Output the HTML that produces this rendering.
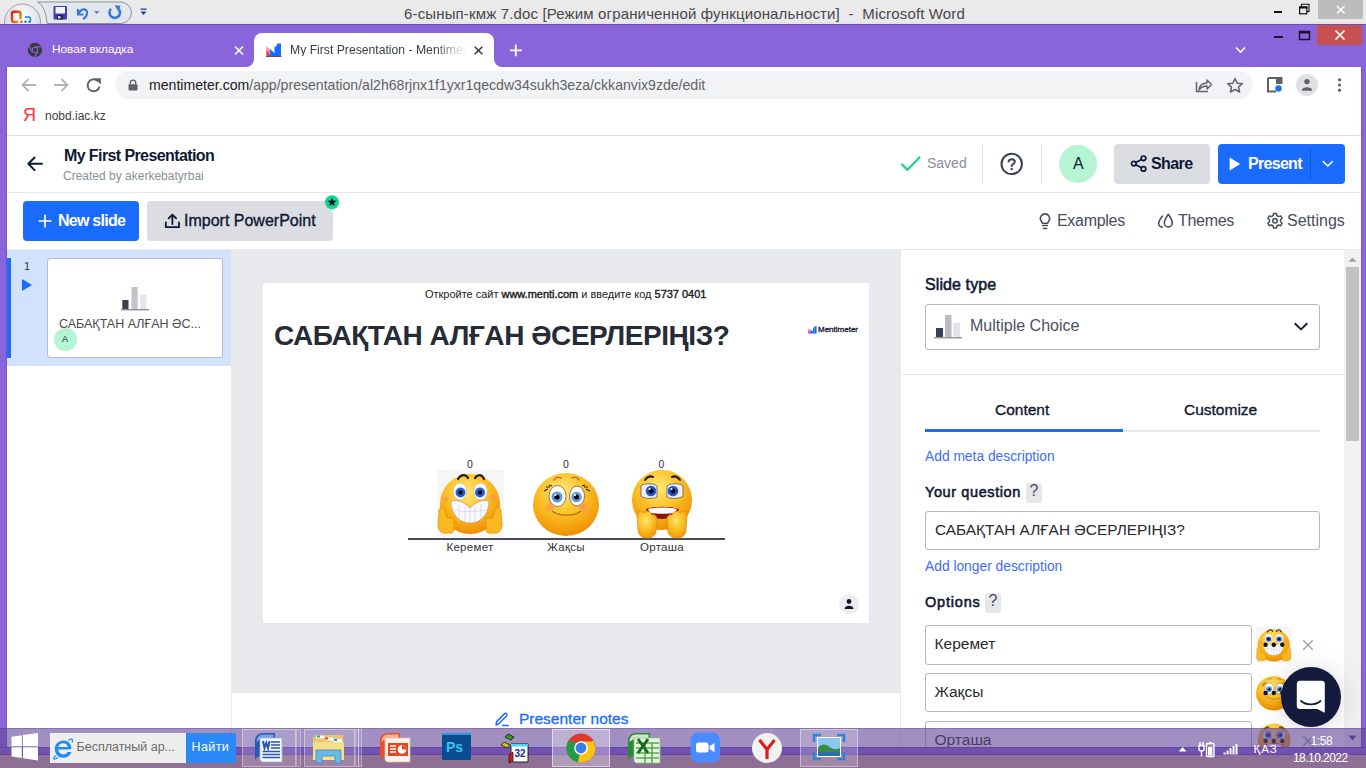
<!DOCTYPE html>
<html><head><meta charset="utf-8">
<style>
*{box-sizing:border-box;margin:0;padding:0}
html,body{width:1366px;height:768px;overflow:hidden;background:#fff;font-family:"Liberation Sans",sans-serif;}
.a{position:absolute}
.t{position:absolute;white-space:nowrap;line-height:1}
svg{position:absolute;overflow:visible}
</style></head><body>
<!-- ============ Word title bar ============ -->
<div class="a" style="left:0;top:0;width:1366px;height:24px;background:#eaeaea"></div>
<div class="a" style="left:0;top:22px;width:1366px;height:2px;background:#e3e3e3"></div>
<div class="t" id="wtitle" style="left:404px;top:6px;font-size:15px;color:#484848;letter-spacing:0.15px">6-сынып-кмж 7.doc [Режим ограниченной функциональности]&nbsp; -&nbsp; Microsoft Word</div>
<div class="a" style="left:1318px;top:0;width:45px;height:19px;background:#bcbcbc"></div>
<svg style="left:0;top:0" width="160" height="24" viewBox="0 0 160 24">
<defs><radialGradient id="ob" cx="50%" cy="30%" r="70%"><stop offset="0" stop-color="#ffffff"/><stop offset="1" stop-color="#c9d2de"/></radialGradient></defs>
<path d="M37.5 2 H122 A12 11 0 0 1 122 23.5 H47 C46 12 43 5 37.5 2 Z" fill="#e3e7ed" stroke="#8d8f93" stroke-width="1"/>
<circle cx="22.5" cy="22" r="18" fill="url(#ob)" stroke="#9aa3ae" stroke-width="1"/>
<defs><linearGradient id="og" x1="0" y1="0" x2="1" y2="1"><stop offset="0" stop-color="#d61a0a"/><stop offset="1" stop-color="#f8a010"/></linearGradient></defs>
<path d="M20.5 19 V13.5 A2 2 0 0 0 18.5 11.8 H14 A2 2 0 0 0 12 13.8 V20 A2 2 0 0 0 14 22 H18.3" fill="none" stroke="url(#og)" stroke-width="2.4"/>
<circle cx="21.5" cy="21.7" r="1.2" fill="#f05a10"/>
<path d="M24.8 17.2 H29.3 A1 1 0 0 1 30.3 18.2 V22" fill="none" stroke="#2a90e0" stroke-width="1.7"/>
<circle cx="25.5" cy="21.7" r="1.2" fill="#1a78d8"/><circle cx="29.5" cy="21.9" r="1.1" fill="#1a78d8"/>
<rect x="53.5" y="6" width="13.5" height="13.5" fill="#3e3eb4" rx="1"/>
<rect x="55.5" y="7" width="9.5" height="6.5" fill="#f4f6ff"/>
<rect x="57" y="15" width="6" height="4.5" fill="#20204a"/><rect x="58" y="16" width="2.5" height="2.5" fill="#ddd"/>
<path d="M78 9 L78 14.5 L83.5 14.5 M78.5 14 C81 8 87 8 87 12.5 C87 16 85 18 83 19" fill="none" stroke="#3a78d4" stroke-width="2.2"/>
<path d="M94 11 h5.5 l-2.75 3 z" fill="#5b7fb8"/>
<path d="M111 8.8 A5.3 5.3 0 1 0 117.8 8.2" fill="none" stroke="#3a78d4" stroke-width="2.6"/>
<path d="M114.5 5.3 L120.5 5.8 L118.5 11.5 Z" fill="#3a78d4"/>
<rect x="140.5" y="8.5" width="6" height="1.3" fill="#1e3f8a"/>
<path d="M140.5 11.5 h6 l-3 3.5 z" fill="#1e3f8a"/>
</svg>
<svg style="left:1270px;top:3px" width="50" height="16" viewBox="0 0 50 16">
<rect x="4" y="8" width="8" height="2" fill="#111"/>
<rect x="29.6" y="4" width="7.2" height="6.8" fill="none" stroke="#111" stroke-width="1.2"/><rect x="29" y="3.5" width="8.4" height="2" fill="#111"/>
<path d="M31.5 3.5 V1.3 H39 V8.5 H37" fill="none" stroke="#111" stroke-width="1.1"/>
</svg>
<svg style="left:1318px;top:0" width="45" height="19" viewBox="0 0 45 19">
<path d="M19 6 L26.5 13.5 M26.5 6 L19 13.5" stroke="#fff" stroke-width="1.5"/>
</svg>

<!-- ============ Chrome frame ============ -->
<div class="a" style="left:0;top:24px;width:1366px;height:731px;background:#8a64db"></div>
<div class="a" style="left:0;top:24px;width:1366px;height:1px;background:#6a4fb0"></div>
<div class="a" style="left:6px;top:67px;width:1px;height:680px;background:#7a56c4"></div>
<div class="a" style="left:1361px;top:67px;width:1px;height:680px;background:#7a56c4"></div>
<div class="a" style="left:1317px;top:25px;width:45px;height:20px;background:#c75050"></div>
<!-- active tab -->
<div class="a" style="left:246px;top:59px;width:256px;height:8px;background:#fff"></div>
<div class="a" style="left:238px;top:51px;width:16px;height:16px;border-radius:50%;background:#8a64db"></div>
<div class="a" style="left:494px;top:51px;width:16px;height:16px;border-radius:50%;background:#8a64db"></div>
<div class="a" style="left:254px;top:33px;width:240px;height:34px;background:#fff;border-radius:8px 8px 0 0"></div>
<div class="t" id="tab1" style="left:52px;top:44px;font-size:11.8px;color:#fff">Новая вкладка</div>
<div class="t" id="tab2" style="width:176px;overflow:hidden;-webkit-mask-image:linear-gradient(90deg,#000 145px,transparent 176px);left:290px;top:43.8px;font-size:12.2px;color:#3c4043">My First Presentation - Mentimet</div>
<svg style="left:1270px;top:25px" width="92" height="36" viewBox="0 0 92 36">
<rect x="4" y="11" width="9" height="2" fill="#1a1030"/>
<rect x="29.5" y="6.5" width="10" height="8" fill="none" stroke="#1a1030" stroke-width="1.5"/>
<rect x="29.5" y="6" width="10" height="2.5" fill="#1a1030"/>
<path d="M65.5 5.5 L74.5 14.5 M74.5 5.5 L65.5 14.5" stroke="#fff" stroke-width="1.7"/>
<path d="M-34 22.5 L-29.5 27 L-25 22.5" fill="none" stroke="#fff" stroke-width="1.6"/>
</svg>
<svg style="left:27px;top:42px" width="16" height="16" viewBox="0 0 16 16">
<circle cx="8" cy="8" r="7.2" fill="#3b3b3f"/>
<circle cx="8" cy="8" r="3.2" fill="#8a64db"/><circle cx="8" cy="8" r="2.2" fill="#3b3b3f"/>
<path d="M8 4.8 L14.5 4.8" stroke="#8a64db" stroke-width="1.2"/>
<path d="M5.2 9.6 L2 4" stroke="#8a64db" stroke-width="1.2"/>
<path d="M10.8 9.6 L7.5 15.2" stroke="#8a64db" stroke-width="1.2"/>
</svg>
<svg style="left:234px;top:46px" width="10" height="9" viewBox="0 0 10 9">
<path d="M1 0.5 L9 8.5 M9 0.5 L1 8.5" stroke="#fff" stroke-width="1.6"/>
</svg>
<svg style="left:266px;top:43px" width="16" height="14" viewBox="0 0 16 14">
<path d="M0.5 13.5 V3 L6 9 V13.5 Z" fill="#f28aa8"/>
<path d="M0.5 13.5 V7 L5 13.5 Z" fill="#e8384f"/>
<path d="M4 13.5 V6 L8.5 10 V4 L11 2.5 V13.5 Z" fill="#196cff"/>
<path d="M11 13.5 V0.5 H15 V13.5 Z" fill="#196cff"/>
<rect x="0" y="13" width="15.5" height="1" fill="#555"/>
</svg>
<svg style="left:474px;top:46px" width="9" height="9" viewBox="0 0 9 9">
<path d="M0.7 0.7 L8.3 8.3 M8.3 0.7 L0.7 8.3" stroke="#3c4043" stroke-width="1.6"/>
</svg>
<svg style="left:509px;top:44px" width="14" height="13" viewBox="0 0 14 13">
<path d="M6.8 0.5 V12.3 M0.8 6.4 H12.8" stroke="#fff" stroke-width="1.8"/>
</svg>



<!-- toolbar -->
<div class="a" style="left:7px;top:67px;width:1354px;height:680px;background:#fff"></div>
<div class="a" style="left:115px;top:71px;width:1138px;height:28px;background:#f1f3f4;border-radius:14px"></div>
<div class="t" id="url" style="left:149px;top:78.1px;font-size:14.1px;color:#5f6368"><span style="color:#202124">mentimeter.com</span>/app/presentation/al2h68rjnx1f1yxr1qecdw34sukh3eza/ckkanvix9zde/edit</div>
<div class="t" id="bm" style="left:45px;top:109.8px;font-size:12px;color:#3c4043">nobd.iac.kz</div>
<div class="a" style="left:7px;top:135px;width:1354px;height:1px;background:#dadce0"></div>
<svg style="left:20px;top:76px" width="85" height="18" viewBox="0 0 85 18">
<path d="M16 9 H3 M8.5 3 L2.5 9 L8.5 15" fill="none" stroke="#b1b3b6" stroke-width="1.8"/>
<path d="M34 9 H47 M41.5 3 L47.5 9 L41.5 15" fill="none" stroke="#b1b3b6" stroke-width="1.8"/>
<path d="M78.3 5.5 A6 6 0 1 0 79.5 10.5" fill="none" stroke="#5f6368" stroke-width="1.9"/>
<path d="M74.5 2.2 L80.8 2.2 L80.8 8.5 Z" fill="#5f6368"/>
</svg>
<svg style="left:127px;top:79px" width="12" height="12" viewBox="0 0 12 12">
<path d="M3.3 5.5 V3.8 A2.7 2.7 0 0 1 8.7 3.8 V5.5" fill="none" stroke="#5f6368" stroke-width="1.4"/>
<rect x="1.5" y="5.3" width="9" height="6.2" rx="1" fill="#5f6368"/>
</svg>
<svg style="left:1194px;top:77px" width="52" height="16" viewBox="0 0 52 16">
<path d="M2.5 5 V14.5 H14" fill="none" stroke="#5f6368" stroke-width="1.5"/>
<path d="M5 13 C5.5 8 8.5 6 13 6 V3 L17.5 7.5 L13 12 V9 C9.5 9 7 10 5 13 Z" fill="none" stroke="#5f6368" stroke-width="1.4" stroke-linejoin="round"/>
<path d="M41 1.5 L43.2 6.2 L48.3 6.7 L44.5 10.1 L45.6 15 L41 12.5 L36.4 15 L37.5 10.1 L33.7 6.7 L38.8 6.2 Z" fill="none" stroke="#5f6368" stroke-width="1.5" stroke-linejoin="round"/>
</svg>
<svg style="left:1267px;top:77px" width="90" height="16" viewBox="0 0 90 16">
<path d="M1 1 H14.5 V7 M9 14.5 H1 V1" fill="none" stroke="#5f6368" stroke-width="2"/>
<rect x="9" y="1" width="5.5" height="6" fill="#5f6368"/>
<circle cx="11.5" cy="11.5" r="3.2" fill="#1a73e8"/>
<circle cx="40" cy="8" r="11" fill="#dfe1e5"/>
<circle cx="40" cy="4.6" r="2.7" fill="#5f6368"/>
<path d="M35 13 C35 9.2 45 9.2 45 13 V13.8 H35 Z" fill="#5f6368"/>
<circle cx="72.5" cy="2.8" r="1.6" fill="#5f6368"/><circle cx="72.5" cy="8" r="1.6" fill="#5f6368"/><circle cx="72.5" cy="13.2" r="1.6" fill="#5f6368"/>
</svg>
<div class="t" style="left:23px;top:106px;font-size:18px;color:#f33;font-family:'Liberation Sans',sans-serif">Я</div>

<!-- ============ Menti header ============ -->
<div class="t" id="ptitle" style="left:64px;top:147.5px;font-size:16px;font-weight:bold;color:#101834;letter-spacing:-0.6px">My First Presentation</div>
<div class="t" id="pby" style="left:63px;top:169.8px;font-size:12px;color:#8a8f98">Created by akerkebatyrbai</div>
<div class="a" style="left:7px;top:192px;width:1354px;height:1px;background:#e8e9ec"></div>

<div class="a" style="left:982px;top:144px;width:1px;height:40px;background:#e6e7eb"></div>
<div class="a" style="left:1041px;top:144px;width:1px;height:40px;background:#e6e7eb"></div>
<div class="t" id="saved" style="left:927px;top:156px;font-size:14px;color:#8a8e9b">Saved</div>
<div class="a" style="left:1059px;top:145px;width:38px;height:38px;border-radius:50%;background:#b6f5d3"></div>
<div class="t" id="avA" style="left:1073px;top:156.3px;font-size:16px;color:#101834">A</div>
<div class="a" style="left:1114px;top:144px;width:96px;height:40px;background:#dcdde2;border-radius:4px"></div>
<div class="t" id="share" style="left:1151px;top:155.5px;font-size:16px;font-weight:bold;color:#101834;letter-spacing:-0.6px">Share</div>
<div class="a" style="left:1218px;top:144px;width:127px;height:40px;background:#196cff;border-radius:4px"></div>
<div class="a" style="left:1310px;top:149px;width:1px;height:30px;background:#1558d6"></div>
<div class="t" id="present" style="left:1248px;top:155.5px;font-size:16px;font-weight:bold;color:#fff;letter-spacing:-0.7px">Present</div>

<div class="a" style="left:23px;top:201px;width:116px;height:40px;background:#196cff;border-radius:4px"></div>
<div class="t" id="newslide" style="left:58px;top:213.3px;font-size:16px;font-weight:bold;color:#fff;letter-spacing:-0.75px">New slide</div>
<div class="a" style="left:147px;top:201px;width:186px;height:40px;background:#dcdde2;border-radius:4px"></div>
<div class="t" id="import" style="left:184px;top:213.3px;font-size:16px;color:#101834;-webkit-text-stroke:0.35px currentColor">Import PowerPoint</div>
<div class="t" id="examples" style="left:1057px;top:213.3px;font-size:16px;color:#474c5e;letter-spacing:-0.3px">Examples</div>
<div class="t" id="themes" style="left:1178px;top:213.3px;font-size:16px;color:#474c5e;letter-spacing:-0.3px">Themes</div>
<div class="t" id="settings" style="left:1287px;top:213.3px;font-size:16px;color:#474c5e">Settings</div>
<svg style="left:27px;top:156px" width="16" height="16" viewBox="0 0 16 16">
<path d="M15 7.8 H2 M7.6 1.5 L1.3 7.8 L7.6 14.1" fill="none" stroke="#101834" stroke-width="2" stroke-linecap="round" stroke-linejoin="round"/>
</svg>
<svg style="left:900px;top:155px" width="22" height="17" viewBox="0 0 22 17">
<path d="M2 9.5 L7.5 14.8 L19.5 2.5" fill="none" stroke="#26d08c" stroke-width="2.3" stroke-linecap="round" stroke-linejoin="round"/>
</svg>
<svg style="left:999px;top:152px" width="25" height="25" viewBox="0 0 25 25">
<circle cx="12.7" cy="11.9" r="10.2" fill="none" stroke="#3b4257" stroke-width="2"/>
<path d="M9.6 9.6 C9.6 6.5 15.8 6.5 15.8 9.8 C15.8 12 12.7 12 12.7 14" fill="none" stroke="#3b4257" stroke-width="2" stroke-linecap="round"/>
<circle cx="12.7" cy="17" r="1.2" fill="#3b4257"/>
</svg>
<svg style="left:1130px;top:155px" width="18" height="18" viewBox="0 0 18 18">
<circle cx="13.5" cy="3.3" r="2.3" fill="none" stroke="#101834" stroke-width="1.7"/>
<circle cx="3.8" cy="8.6" r="2.3" fill="none" stroke="#101834" stroke-width="1.7"/>
<circle cx="13.5" cy="13.9" r="2.3" fill="none" stroke="#101834" stroke-width="1.7"/>
<path d="M5.8 7.5 L11.5 4.4 M5.8 9.7 L11.5 12.8" stroke="#101834" stroke-width="1.7"/>
</svg>
<svg style="left:1229px;top:157px" width="12" height="14" viewBox="0 0 12 14">
<path d="M0.6 0.5 L11.2 7 L0.6 13.6 Z" fill="#fff"/>
</svg>
<svg style="left:1322px;top:160px" width="12" height="8" viewBox="0 0 12 8">
<path d="M1.2 1.5 L5.8 6 L10.4 1.5" fill="none" stroke="#fff" stroke-width="1.6" stroke-linecap="round" stroke-linejoin="round"/>
</svg>
<svg style="left:38px;top:214px" width="14" height="14" viewBox="0 0 14 14">
<path d="M7 1.3 V12.7 M1.3 7 H12.7" stroke="#fff" stroke-width="1.7" stroke-linecap="round"/>
</svg>
<svg style="left:164px;top:213px" width="17" height="16" viewBox="0 0 17 16">
<path d="M1.8 9.5 V14.2 H15 V9.5" fill="none" stroke="#101834" stroke-width="1.8" stroke-linecap="round" stroke-linejoin="round"/>
<path d="M8.4 11 V1.8 M4.6 5.4 L8.4 1.6 L12.2 5.4" fill="none" stroke="#101834" stroke-width="1.8" stroke-linecap="round" stroke-linejoin="round"/>
</svg>
<svg style="left:324px;top:195px" width="16" height="16" viewBox="0 0 16 16">
<circle cx="8" cy="7.2" r="7" fill="#14d68f"/>
<path d="M8 2.6 L9.3 5.6 L12.5 5.8 L10 7.9 L10.9 11 L8 9.3 L5.1 11 L6 7.9 L3.5 5.8 L6.7 5.6 Z" fill="#101834"/>
</svg>
<svg style="left:1038px;top:212px" width="14" height="18" viewBox="0 0 14 18">
<path d="M4.3 11.2 L2.6 7.8 A4.6 4.6 0 1 1 11.4 7.8 L9.7 11.2 Z" fill="none" stroke="#474c5e" stroke-width="1.6" stroke-linejoin="round"/>
<path d="M4.6 13.6 H9.4 M5.3 16.4 H8.7" stroke="#474c5e" stroke-width="1.5" stroke-linecap="round"/>
</svg>
<svg style="left:1157px;top:213px" width="18" height="16" viewBox="0 0 18 16">
<path d="M11.3 1.3 C9.5 4 7.3 7 7.3 9.9 A4 4 0 0 0 15.3 9.9 C15.3 7 13.1 4 11.3 1.3 Z" fill="none" stroke="#474c5e" stroke-width="1.6" stroke-linejoin="round"/>
<path d="M5.3 3.2 C3.5 5.5 1.6 8 1.6 10.3 A3.6 3.6 0 0 0 5.5 14" fill="none" stroke="#474c5e" stroke-width="1.6" stroke-linecap="round"/>
</svg>
<svg style="left:1266px;top:212px" width="18" height="18" viewBox="0 0 18 18">
<path d="M7.6 1.5 H10.4 L10.9 3.6 L12.6 4.6 L14.7 3.9 L16.1 6.3 L14.5 7.8 V9.8 L16.1 11.3 L14.7 13.7 L12.6 13 L10.9 14 L10.4 16.1 H7.6 L7.1 14 L5.4 13 L3.3 13.7 L1.9 11.3 L3.5 9.8 V7.8 L1.9 6.3 L3.3 3.9 L5.4 4.6 L7.1 3.6 Z" fill="none" stroke="#474c5e" stroke-width="1.5" stroke-linejoin="round"/>
<circle cx="9" cy="8.8" r="2.3" fill="none" stroke="#474c5e" stroke-width="1.5"/>
</svg>

<div class="a" style="left:7px;top:249px;width:1354px;height:1px;background:#e8e9ec"></div>

<!-- ============ left panel ============ -->
<div class="a" style="left:7px;top:250px;width:224px;height:116px;background:#d2e2fc"></div>
<div class="a" style="left:7px;top:258px;width:4px;height:100px;background:#196cff"></div>
<div class="t" id="num1" style="left:24px;top:260.7px;font-size:11px;color:#333">1</div>
<div class="a" style="left:47px;top:258px;width:176px;height:100px;background:#fff;border:1px solid #b9bcc4;border-radius:3px"></div>
<div class="t" id="thumbt" style="left:59px;top:318.2px;font-size:12.5px;color:#4a4a4a">САБАҚТАН АЛҒАН ӘС...</div>
<div class="a" style="left:54px;top:328px;width:23px;height:23px;border-radius:50%;background:#b6f5d3"></div>
<div class="t" id="thumbA" style="left:62px;top:335px;font-size:9px;color:#101834">A</div>
<svg style="left:21px;top:278px" width="12" height="14" viewBox="0 0 12 14">
<path d="M1 1 L11 7 L1 13 Z" fill="#196cff"/>
</svg>
<svg style="left:120px;top:286px" width="30" height="25" viewBox="0 0 30 25">
<rect x="2.3" y="14" width="6.2" height="9" fill="#3a3f4b"/>
<rect x="11.5" y="1" width="6.2" height="22" fill="#c2c4ca"/>
<rect x="20.2" y="8.5" width="6.2" height="14.5" fill="#e6e7ea"/>
<rect x="1" y="23" width="28" height="1.4" fill="#8a8d94"/>
</svg>

<!-- ============ canvas ============ -->
<div class="a" style="left:231px;top:250px;width:670px;height:443px;background:#e8e9ed"></div>
<div class="a" style="left:263px;top:283px;width:606px;height:340px;background:#fff;border-radius:2px"></div>
<div class="t" id="shdr" style="left:425px;top:288.7px;font-size:11px;color:#222;letter-spacing:-0.02px">Откройте сайт <span style="-webkit-text-stroke:0.4px #222">www.menti.com</span> и введите код <span style="-webkit-text-stroke:0.4px #222">5737 0401</span></div>
<div class="t" id="stitle" style="left:274px;top:322.1px;font-size:28px;font-weight:bold;color:#262b38;letter-spacing:-0.45px">САБАҚТАН АЛҒАН ӘСЕРЛЕРІҢІЗ?</div>
<div class="t" id="mlogo" style="left:818px;top:326px;font-size:8px;color:#101834;-webkit-text-stroke:0.3px #101834">Mentimeter</div>
<div class="t" id="c0a" style="left:440px;width:60px;text-align:center;top:458.5px;font-size:10.5px;color:#333">0</div>
<div class="t" id="c0b" style="left:536px;width:60px;text-align:center;top:458.5px;font-size:10.5px;color:#333">0</div>
<div class="t" id="c0c" style="left:631.5px;width:60px;text-align:center;top:458.5px;font-size:10.5px;color:#333">0</div>
<div class="a" style="left:408px;top:538px;width:317px;height:2px;background:#454b58"></div>
<div class="t" id="lbl1" style="left:420px;width:100px;text-align:center;top:542.4px;font-size:11.5px;letter-spacing:0.3px;color:#333">Керемет</div>
<div class="t" id="lbl2" style="left:516px;width:100px;text-align:center;top:542.4px;font-size:11.5px;letter-spacing:0.3px;color:#333">Жақсы</div>
<div class="t" id="lbl3" style="left:612px;width:100px;text-align:center;top:542.4px;font-size:11.5px;letter-spacing:0.3px;color:#333">Орташа</div>
<div class="a" style="left:839px;top:594px;width:20px;height:20px;border-radius:50%;background:#ededed"></div>
<svg style="left:0;top:0" width="0" height="0">
<defs>
<radialGradient id="fy" cx="45%" cy="30%" r="72%"><stop offset="0" stop-color="#ffe97a"/><stop offset="0.45" stop-color="#fcc42a"/><stop offset="0.85" stop-color="#f29c0a"/><stop offset="1" stop-color="#e98a06"/></radialGradient>
<radialGradient id="fh" cx="45%" cy="35%" r="70%"><stop offset="0" stop-color="#ffe36a"/><stop offset="0.6" stop-color="#f9b81c"/><stop offset="1" stop-color="#ec8f08"/></radialGradient>
<radialGradient id="bl" cx="50%" cy="50%" r="50%"><stop offset="0" stop-color="#f5806a" stop-opacity="0.75"/><stop offset="1" stop-color="#f5806a" stop-opacity="0"/></radialGradient>
<g id="e1">
<rect x="5" y="4" width="67" height="67" fill="#f6f6f6"/>
<circle cx="38" cy="38" r="30" fill="url(#fy)"/>
<path d="M26 13 C29 8 34 8 36 12" fill="none" stroke="#222" stroke-width="2.2" stroke-linecap="round"/>
<path d="M43 12 C46 8 50 8 52 13" fill="none" stroke="#222" stroke-width="2.2" stroke-linecap="round"/>
<ellipse cx="28" cy="25.5" rx="6.8" ry="8.5" fill="#fff" stroke="#e8b08a" stroke-width="0.8"/>
<ellipse cx="48.5" cy="25.5" rx="6.8" ry="8.5" fill="#fff" stroke="#e8b08a" stroke-width="0.8"/>
<circle cx="28.5" cy="26.5" r="5" fill="#1f63e0"/><circle cx="48" cy="26.5" r="5" fill="#1f63e0"/>
<circle cx="28.5" cy="26.5" r="2.2" fill="#000"/><circle cx="48" cy="26.5" r="2.2" fill="#000"/>
<circle cx="14" cy="33" r="4" fill="url(#bl)"/><circle cx="61" cy="31" r="4" fill="url(#bl)"/>
<path d="M19 35 C26 33 33 37 38 42 C43 37 50 33 57 35 C57 48 49 57 38 57 C27 57 19 48 19 35 Z" fill="#fafaff" stroke="#c8a070" stroke-width="0.8"/>
<path d="M22 44 C30 46 46 46 55 44 M27 38 V55 M33 41 V57 M38 42 V57 M43 41 V57 M49 38 V55" fill="none" stroke="#c9cde0" stroke-width="0.7"/>
<path d="M7 47 C6 42 10 40 13 43 L15 52 H20 C23 52 23 56 21 57 C23 58 23 61 21 62 C23 63 22 67 19 67 H12 C8 67 6 63 6 58 Z" fill="#fcb820" stroke="#e4900a" stroke-width="0.8"/>
<path d="M69 47 C70 42 66 40 63 43 L61 52 H56 C53 52 53 56 55 57 C53 58 53 61 55 62 C53 63 54 67 57 67 H64 C68 67 70 63 70 58 Z" fill="#fcb820" stroke="#e4900a" stroke-width="0.8"/>
</g>
<g id="e2">
<ellipse cx="38" cy="38.5" rx="33" ry="31.5" fill="url(#fy)"/>
<path d="M26 14 C28 11 31 11 33 12 M44 12 C46 11 49 11 51 14" fill="none" stroke="#b87a30" stroke-width="1.6" stroke-linecap="round"/>
<ellipse cx="29.5" cy="30" rx="8.5" ry="10.5" fill="#fff" stroke="#7a5a40" stroke-width="0.8"/>
<ellipse cx="49" cy="30" rx="7.5" ry="10" fill="#fff" stroke="#7a5a40" stroke-width="0.8"/>
<circle cx="29" cy="31" r="5.5" fill="#5a9ee0"/><circle cx="48.5" cy="31" r="5.3" fill="#5a9ee0"/>
<circle cx="29" cy="31" r="2.6" fill="#000"/><circle cx="48.5" cy="31" r="2.5" fill="#000"/>
<circle cx="27.5" cy="29" r="1.1" fill="#fff"/><circle cx="47" cy="29" r="1.1" fill="#fff"/>
<path d="M16 25 L20 23 M18 21 L22 21 M21 19 L24 20 M62 25 L58 23 M60 21 L56 21 M57 19 L54 20" stroke="#222" stroke-width="1.1"/>
<circle cx="22" cy="41" r="6" fill="url(#bl)"/><circle cx="55" cy="41" r="6" fill="url(#bl)"/>
<path d="M24 45 C30 50 46 51 53 45" fill="none" stroke="#b86a10" stroke-width="1.1"/>
</g>
<g id="e3">
<circle cx="38" cy="34" r="30" fill="url(#fy)"/>
<path d="M21 14 C24 10 27 10 29 11 M48 11 C50 10 53 10 56 14" fill="none" stroke="#222" stroke-width="2" stroke-linecap="round"/>
<path d="M17 20 C20 17 30 17 33 20 L33 31 C30 33 20 33 17 30 Z" fill="#f0f0f2" stroke="#666" stroke-width="0.9"/>
<path d="M43 20 C46 17 56 17 59 20 L59 30 C56 33 46 33 43 31 Z" fill="#f0f0f2" stroke="#666" stroke-width="0.9"/>
<circle cx="27" cy="25" r="5.3" fill="#2456d6"/><circle cx="49" cy="25" r="5.3" fill="#2456d6"/>
<circle cx="27" cy="25" r="2.5" fill="#000"/><circle cx="49" cy="25" r="2.5" fill="#000"/>
<circle cx="25.5" cy="23" r="1.1" fill="#fff"/><circle cx="47.5" cy="23" r="1.1" fill="#fff"/>
<path d="M22 43 C30 40 46 40 55 43 C52 50 45 53 38 53 C31 53 25 50 22 43 Z" fill="#8a1010"/>
<path d="M24 43 C30 41 46 41 53 43 L51 47 C44 48 32 48 26 47 Z" fill="#f8f8f8"/>
<path d="M13 50 C12 45 17 44 20 47 C22 44 27 45 28 49 C30 48 34 50 33 55 L32 66 C31 71 26 72 22 72 C17 72 14 68 14 63 Z" fill="url(#fh)" stroke="#e08a08" stroke-width="0.7"/>
<path d="M63 50 C64 45 59 44 56 47 C54 44 49 45 48 49 C46 48 42 50 43 55 L44 66 C45 71 50 72 54 72 C59 72 62 68 62 63 Z" fill="url(#fh)" stroke="#e08a08" stroke-width="0.7"/>
</g>
</defs></svg>
<svg style="left:432px;top:466px" width="76" height="76" viewBox="0 0 76 76"><use href="#e1"/></svg>
<svg style="left:528px;top:466px" width="76" height="76" viewBox="0 0 76 76"><use href="#e2"/></svg>
<svg style="left:624px;top:466px" width="76" height="76" viewBox="0 0 76 76"><use href="#e3"/></svg>
<svg style="left:808px;top:326px" width="9" height="8" viewBox="0 0 9 8">
<path d="M0.3 7.6 V2 L3 5 V7.6 Z" fill="#f28aa8"/><path d="M0.3 7.6 V4.5 L2.5 7.6Z" fill="#e8384f"/>
<path d="M2.5 7.6 V3.5 L5 5.5 V2 L6.3 1.2 V7.6 Z" fill="#196cff"/><rect x="6.3" y="0.3" width="2.3" height="7.3" fill="#196cff"/>
</svg>
<svg style="left:839px;top:594px" width="20" height="20" viewBox="0 0 20 20">
<circle cx="10" cy="7.5" r="2.4" fill="#101834"/>
<path d="M5.5 15 C5.5 10.5 14.5 10.5 14.5 15 Z" fill="#101834"/>
</svg>

<!-- notes -->
<div class="t" id="notes" style="left:519px;top:711.2px;font-size:15.5px;color:#196cff;-webkit-text-stroke:0.3px #196cff">Presenter notes</div>

<!-- ============ right panel ============ -->
<div class="a" style="left:900px;top:693px;width:1px;height:54px;background:#e8e9ec"></div>
<div class="a" style="left:231px;top:693px;width:1px;height:54px;background:#e8e9ec"></div>
<div class="t" id="stype" style="left:925px;top:276.5px;font-size:16px;font-weight:normal;color:#101834;letter-spacing:0.1px;-webkit-text-stroke:0.55px #101834">Slide type</div>
<div class="a" style="left:925px;top:304px;width:395px;height:46px;border:1px solid #b5b8c1;border-radius:3px"></div>
<div class="t" id="mc" style="left:970px;top:318px;font-size:16px;color:#4a4f5e">Multiple Choice</div>
<div class="a" style="left:902px;top:374px;width:442px;height:1px;background:#e8e9ec"></div>
<div class="t" id="content" style="left:995px;top:401.9px;font-size:15.5px;color:#101834;-webkit-text-stroke:0.35px currentColor">Content</div>
<div class="t" id="custom" style="left:1184px;top:401.9px;font-size:15.5px;color:#101834;-webkit-text-stroke:0.35px currentColor">Customize</div>
<div class="a" style="left:925px;top:430px;width:395px;height:2px;background:#e6e7eb"></div>
<div class="a" style="left:925px;top:429px;width:198px;height:3px;background:#196cff"></div>
<div class="t" id="meta" style="left:925px;top:449.6px;font-size:13.8px;color:#3e6bff">Add meta description</div>
<div class="t" id="yq" style="left:925px;top:485px;font-size:14.5px;font-weight:normal;color:#101834;letter-spacing:0.6px;-webkit-text-stroke:0.55px #101834">Your question</div>
<div class="a" style="left:1026px;top:483px;width:16px;height:20px;background:#e6e7eb;border-radius:3px"></div>
<div class="t" id="q1" style="left:1029.5px;top:483px;font-size:16px;color:#474c5e">?</div>
<div class="a" style="left:925px;top:511px;width:395px;height:39px;border:1px solid #b5b8c1;border-radius:3px"></div>
<div class="t" id="qtext" style="left:935px;top:522px;font-size:15.4px;color:#2a2a2a">САБАҚТАН АЛҒАН ӘСЕРЛЕРІҢІЗ?</div>
<div class="t" id="longer" style="left:925px;top:560px;font-size:13.8px;color:#3e6bff">Add longer description</div>
<div class="t" id="opts" style="left:925px;top:595px;font-size:14.5px;font-weight:normal;color:#101834;-webkit-text-stroke:0.55px #101834;letter-spacing:0.8px">Options</div>
<div class="a" style="left:985px;top:593px;width:16px;height:20px;background:#e6e7eb;border-radius:3px"></div>
<div class="t" id="q2" style="left:988.5px;top:593px;font-size:16px;color:#474c5e">?</div>
<div class="a" style="left:925px;top:625px;width:327px;height:40px;border:1px solid #b5b8c1;border-radius:3px"></div>
<div class="t" id="o1" style="left:934.5px;top:635.8px;font-size:15.5px;color:#2a2a2a">Керемет</div>
<div class="a" style="left:925px;top:673px;width:327px;height:39px;border:1px solid #b5b8c1;border-radius:3px"></div>
<div class="t" id="o2" style="left:934.5px;top:683.9px;font-size:15.5px;color:#2a2a2a">Жақсы</div>
<div class="a" style="left:925px;top:721px;width:327px;height:40px;border:1px solid #b5b8c1;border-radius:3px"></div>
<div class="t" id="o3" style="left:934.5px;top:731.5px;font-size:15.5px;color:#2a2a2a">Орташа</div>
<svg style="left:933px;top:314px" width="30" height="25" viewBox="0 0 30 25">
<rect x="3" y="14" width="7" height="9" fill="#3a3f56"/>
<rect x="12" y="1" width="6.5" height="22" fill="#b8bac2"/>
<rect x="20.5" y="9" width="6.5" height="14" fill="#e3e4e8"/>
<rect x="1" y="23" width="28" height="1.5" fill="#9a9ca4"/>
</svg>
<svg style="left:1293px;top:321px" width="16" height="11" viewBox="0 0 16 11">
<path d="M2.2 2.8 L8 8.4 L13.8 2.8" fill="none" stroke="#101834" stroke-width="1.9" stroke-linecap="round" stroke-linejoin="round"/>
</svg>
<svg style="left:1256px;top:627px" width="36" height="36" viewBox="5 4 67 67"><use href="#e1"/></svg>
<svg style="left:1256px;top:627px" width="36" height="36" viewBox="0 0 36 36">
<circle cx="9.6" cy="17.7" r="2.2" fill="#111"/><circle cx="17.8" cy="17.7" r="2.2" fill="#111"/><circle cx="26.3" cy="17.7" r="2.2" fill="#111"/>
</svg>
<svg style="left:1256px;top:675px" width="36" height="36" viewBox="5 5 66 66"><use href="#e2"/></svg>
<svg style="left:1256px;top:675px" width="36" height="36" viewBox="0 0 36 36">
<circle cx="9.6" cy="18" r="2.2" fill="#111"/><circle cx="17.8" cy="18" r="2.2" fill="#111"/><circle cx="26.3" cy="18" r="2.2" fill="#111"/>
</svg>
<svg style="left:1256px;top:723px" width="36" height="36" viewBox="5 3 66 66"><use href="#e3"/></svg>
<svg style="left:1256px;top:723px" width="36" height="36" viewBox="0 0 36 36">
<circle cx="9.6" cy="18" r="2.2" fill="#111"/><circle cx="17.8" cy="18" r="2.2" fill="#111"/><circle cx="26.3" cy="18" r="2.2" fill="#111"/>
</svg>
<svg style="left:1302px;top:639px" width="12" height="12" viewBox="0 0 12 12">
<path d="M1.3 1.3 L10.7 10.7 M10.7 1.3 L1.3 10.7" stroke="#9a9ca3" stroke-width="1.3"/>
</svg>
<svg style="left:1302px;top:735px" width="12" height="12" viewBox="0 0 12 12">
<path d="M1.3 1.3 L10.7 10.7 M10.7 1.3 L1.3 10.7" stroke="#9a9ca3" stroke-width="1.3"/>
</svg>
<svg style="left:494px;top:712px" width="16" height="15" viewBox="0 0 16 15">
<path d="M2 13 L2.6 9.6 L10.6 1.6 A1.5 1.5 0 0 1 12.7 3.7 L4.7 11.7 Z" fill="none" stroke="#196cff" stroke-width="1.5" stroke-linejoin="round"/>
<path d="M8.5 13.6 H14.2" stroke="#196cff" stroke-width="1.5" stroke-linecap="round"/>
</svg>

<!-- scrollbar -->
<div class="a" style="left:1344px;top:250px;width:17px;height:497px;background:#f1f1f1"></div>
<div class="a" style="left:1346px;top:267px;width:13px;height:174px;background:#c1c1c1"></div>
<svg style="left:1344px;top:254px" width="17" height="10" viewBox="0 0 17 10"><path d="M4.5 7.8 L8.5 3.5 L12.5 7.8 Z" fill="#a3a3a3"/></svg>

<!-- intercom -->
<div class="a" style="left:1281px;top:667px;width:60px;height:60px;border-radius:50%;background:#131a3b;box-shadow:0 1px 6px rgba(0,0,0,0.06),0 2px 32px rgba(0,0,0,0.14)"></div>
<svg style="left:1296px;top:680px" width="30" height="34" viewBox="0 0 30 34">
<path d="M4 0.8 H25.5 A3.3 3.3 0 0 1 28.8 4.1 V32.8 L21 29 H4 A3.3 3.3 0 0 1 0.8 25.7 V4.1 A3.3 3.3 0 0 1 4 0.8 Z" fill="#fff"/>
<path d="M5 21 C10 25.5 19.5 25.5 24.5 21" fill="none" stroke="#131a3b" stroke-width="1.7" stroke-linecap="round"/>
</svg>

<!-- ============ taskbar ============ -->
<div class="a" style="left:0;top:747px;width:1366px;height:8px;background:#8a64db"></div>
<div class="a" style="left:0;top:755px;width:1366px;height:13px;background:#d2b293"></div>
<div class="a" style="left:0;top:728px;width:1366px;height:40px;background:rgba(97,68,150,0.6)"></div>
<div class="a" style="left:0;top:728px;width:1366px;height:1px;background:rgba(80,50,130,0.3)"></div>
<div class="a" style="left:0;top:747px;width:1366px;height:1px;background:rgba(60,30,110,0.25)"></div>
<div class="a" style="left:0;top:754px;width:1366px;height:1px;background:rgba(60,30,110,0.25)"></div>
<!-- windows logo -->
<svg style="left:10px;top:733px" width="30" height="29" viewBox="0 0 30 29">
<path d="M1.5 3.8 L11.8 2.3 V13.1 H1.5 Z M13 2.1 L28 0 V13.1 H13 Z M1.5 14.3 H11.8 V25.1 L1.5 23.6 Z M13 14.3 H28 V27.4 L13 25.3 Z" fill="#fff"/>
</svg>
<!-- search -->
<div class="a" style="left:50px;top:733px;width:136px;height:30px;background:#eeeeee"></div>
<div class="a" style="left:186px;top:733px;width:50px;height:30px;background:#2a8af5"></div>
<div class="t" style="left:76.5px;top:741px;font-size:12.5px;color:#6a6a6a">Бесплатный ар...</div>
<div class="t" style="left:191.5px;top:741px;font-size:12.5px;letter-spacing:0.4px;color:#fff">Найти</div>
<svg style="left:53px;top:738px" width="20" height="21" viewBox="0 0 20 21">
<path d="M16.5 11.5 H5.2 C5.4 14.6 7.5 16.4 10.2 16.4 C12.3 16.4 13.8 15.5 14.6 14 H18.4 C17.2 17.6 14 19.8 10.2 19.8 C5.2 19.8 1.8 16 1.8 11 C1.8 6 5.4 2.4 10.2 2.4 C15 2.4 18.5 5.9 18.5 10.6 Z M5.3 9 H14.8 C14.5 6.5 12.6 5.2 10.1 5.2 C7.6 5.2 5.7 6.7 5.3 9 Z" fill="#1e8ef5"/>
<path d="M2.5 17.5 C-1 21.5 1.5 22 5 19.5 M15.5 2.5 C18.5 0.3 20.5 1 19 4.5" fill="none" stroke="#1e8ef5" stroke-width="1.3"/>
</svg>
<!-- button highlights -->
<div class="a" style="left:241.5px;top:729px;width:54px;height:38px;background:rgba(255,255,255,0.14);border:1px solid rgba(255,255,255,0.38)"></div>
<div class="a" style="left:295.5px;top:729px;width:5px;height:38px;background:rgba(255,255,255,0.1);border:1px solid rgba(255,255,255,0.3)"></div>
<div class="a" style="left:304px;top:729px;width:51px;height:38px;background:rgba(255,255,255,0.14);border:1px solid rgba(255,255,255,0.38)"></div>
<div class="a" style="left:355px;top:729px;width:4px;height:38px;background:rgba(255,255,255,0.1);border:1px solid rgba(255,255,255,0.3)"></div>
<div class="a" style="left:358px;top:729px;width:4px;height:38px;background:rgba(255,255,255,0.1);border:1px solid rgba(255,255,255,0.3)"></div>
<div class="a" style="left:552px;top:729px;width:58px;height:38px;background:rgba(255,255,255,0.3);border:1px solid rgba(255,255,255,0.55)"></div>
<div class="a" style="left:800px;top:729px;width:58px;height:38px;background:rgba(255,255,255,0.18);border:1px solid rgba(255,255,255,0.4)"></div>
<!-- word icon -->
<svg style="left:252px;top:732px" width="32" height="31" viewBox="0 0 32 31">
<path d="M3 9 C3 4 6 1 11 1 H23 V24 H9 C5 24 3 27 3 29 Z" fill="#2857b8"/>
<path d="M4.5 10 C4.5 6 6.5 2.5 11 2.5 H21.5 V7 H11 C8 7 6 8.5 4.5 10 Z" fill="#7aa4e8"/>
<path d="M8 6 H30 V30 H10 L8 28 Z" fill="#f4f7fc" stroke="#9db4da" stroke-width="0.8"/>
<path d="M11 9 L12.5 16 L14.3 11 L16 16 L17.6 9" fill="none" stroke="#2656b0" stroke-width="2.1"/>
<path d="M19 10 H28 M19 13 H28 M19 16 H28 M10.5 19.5 H28 M10.5 22.5 H28 M10.5 25.5 H28" stroke="#2a56b0" stroke-width="1.6"/>
</svg>
<!-- explorer -->
<svg style="left:312px;top:734px" width="34" height="30" viewBox="0 0 34 30">
<path d="M1 3 H9 L11 1 H31 V26 H1 Z" fill="#e8c868"/>
<rect x="4" y="1.5" width="8" height="3" fill="#fff"/><rect x="5" y="1.5" width="3" height="2" fill="#2db83a"/>
<rect x="13" y="3.5" width="8" height="3" fill="#fff"/><rect x="13" y="3.5" width="3" height="2" fill="#e0402a"/>
<rect x="21" y="5" width="9" height="3" fill="#fff"/><rect x="22" y="5" width="3" height="2" fill="#2a90e0"/>
<path d="M1 8 H32 V26 H1 Z" fill="#f5df8a"/>
<path d="M4 16 H29 V29 H23 V22 H10 V29 H4 Z" fill="#6ab8e8" stroke="#3a8ac8" stroke-width="0.8"/>
</svg>
<!-- powerpoint -->
<svg style="left:378px;top:732px" width="33" height="31" viewBox="0 0 33 31">
<path d="M2 9 C2 4 5 1 10 1 H22 V24 H8 C4 24 2 27 2 29 Z" fill="#e8502a"/>
<path d="M3.5 10 C3.5 6 5.5 2.5 10 2.5 H20.5 V7 H10 C7 7 5 8.5 3.5 10 Z" fill="#fbb090"/>
<path d="M7 6 H32 V30 H9 L7 28 Z" fill="#fdf2ec" stroke="#e8b8a0" stroke-width="0.8"/>
<rect x="10" y="11" width="20" height="13" fill="#e04a20"/>
<path d="M12 14 H18 M12 17 H18 M12 20 H18" stroke="#fff" stroke-width="1.5"/>
<circle cx="24" cy="17.5" r="4.3" fill="#fff"/><path d="M24 17.5 V13.2 A4.3 4.3 0 0 1 28.3 17.5 Z" fill="#e04a20"/>
</svg>
<!-- photoshop -->
<svg style="left:441px;top:732px" width="32" height="29" viewBox="0 0 32 29">
<rect x="1" y="1" width="29" height="27" rx="1.5" fill="#0a4d8f"/>
<rect x="1" y="1" width="29" height="2" fill="#2a9ae0"/>
<text x="5" y="20" font-family="Liberation Sans" font-weight="bold" font-size="14" fill="#3ac4f5">Ps</text>
</svg>
<!-- calendar 32 -->
<svg style="left:502px;top:732px" width="30" height="33" viewBox="0 0 30 33">
<path d="M6 2 L12 5 L9 8 L3 5 Z" fill="#3a9a20" stroke="#111" stroke-width="0.8"/>
<path d="M2 10 L8 13 L5 16 L-1 13 Z" fill="#c8c820" stroke="#111" stroke-width="0.8"/>
<path d="M9 12 H26 V30 H11 L9 28 Z" fill="#fff" stroke="#111" stroke-width="0.9"/>
<rect x="9" y="12" width="17" height="2.5" fill="#4ad8e8"/>
<text x="12.5" y="25" font-family="Liberation Sans" font-weight="bold" font-size="10" fill="#1a2a8a">32</text>
<path d="M7 23 L11 20 V29 L7 31 Z" fill="#d81818" stroke="#111" stroke-width="0.7"/>
</svg>
<!-- chrome -->
<svg style="left:566px;top:733px" width="30" height="30" viewBox="0 0 30 30">
<circle cx="15" cy="15" r="14.5" fill="#dd3b2c"/>
<path d="M15 15 L2.4 7.8 A14.5 14.5 0 0 0 12 29.2 Z" fill="#1e9e48"/>
<path d="M15 15 L12 29.2 A14.5 14.5 0 0 0 29.5 15 L27.6 7.8 Z" fill="#fcc419"/>
<path d="M15 8.5 H27.6 L22.5 15 Z" fill="#fcc419"/>
<path d="M15 15 L9.4 18.3 L2.4 7.8 L8.5 9 Z" fill="#1e9e48"/>
<circle cx="15" cy="15" r="6.8" fill="#fff"/>
<circle cx="15" cy="15" r="5.4" fill="#3b7de8"/>
</svg>
<!-- excel -->
<svg style="left:626px;top:731px" width="36" height="33" viewBox="0 0 36 33">
<path d="M2 10 C2 5 5 2 10 2 H24 V25 H8 C4 25 2 28 2 30 Z" fill="#2a8a38"/>
<path d="M3.5 11 C3.5 7 5.5 3.5 10 3.5 H22.5 V8 H10 C7 8 5 9.5 3.5 11 Z" fill="#cfe8c8"/>
<path d="M8 7 H34 V32 H10 L8 30 Z" fill="#e8f4e2" stroke="#8cc880" stroke-width="0.8"/>
<path d="M10 12 H33 M10 17 H33 M10 22 H33 M10 27 H33 M19 12 V32 M26 12 V32" stroke="#5aa84a" stroke-width="1.5"/>
<path d="M12 8 L22 22 M22 8 L12 22" stroke="#1a6a2a" stroke-width="3"/>
</svg>
<!-- zoom -->
<svg style="left:690px;top:732px" width="31" height="31" viewBox="0 0 31 31">
<rect x="0.5" y="0.5" width="29.5" height="30" rx="8" fill="#4a8cff"/>
<rect x="6" y="10.5" width="12.5" height="10" rx="2.5" fill="#fff"/>
<path d="M19.5 14.2 L24.5 11 V20.2 L19.5 17 Z" fill="#fff"/>
</svg>
<!-- yandex -->
<svg style="left:751px;top:732px" width="32" height="32" viewBox="0 0 32 32">
<circle cx="16" cy="16" r="15" fill="#f2f2f2"/>
<path d="M8.5 8 L16 17.5 L23.5 8 M16 17.5 V27" fill="none" stroke="#e21b1b" stroke-width="3.2"/>
</svg>
<!-- photos -->
<svg style="left:813px;top:734px" width="32" height="26" viewBox="0 0 32 26">
<rect x="4" y="3" width="24" height="20" fill="#fff"/>
<rect x="5" y="4" width="22" height="18" fill="#8ac8f0"/>
<path d="M5 14 C9 9 13 10 18 14 C22 16 25 15 27 14 V22 H5 Z" fill="#3a8a4a"/>
<path d="M5 18 H27 V22 H5 Z" fill="#2a70b0"/>
<path d="M1 8 V1 H8 M24 1 H31 V8 M1 18 V25 H8 M24 25 H31 V18" fill="none" stroke="#2a84d8" stroke-width="2.4"/>
</svg>
<!-- tray -->
<svg style="left:1178px;top:741px" width="62" height="17" viewBox="0 0 62 17">
<path d="M0.8 10.5 L4.6 6 L8.4 10.5 Z" fill="#fff"/>
<path d="M22 1 V4.5 M25 1 V4.5 M21 4.5 H26 V8 C26 9.5 24.8 10 23.5 10 C22.2 10 21 9.5 21 8 Z M23.5 10 V15.5" fill="none" stroke="#fff" stroke-width="1.4"/>
<rect x="28.5" y="2.5" width="7.5" height="13" rx="1" fill="none" stroke="#fff" stroke-width="1.4"/>
<rect x="31" y="1" width="2.5" height="1.6" fill="#fff"/>
<rect x="30" y="6" width="4.5" height="8.5" fill="#fff"/>
<rect x="45.5" y="11.5" width="2" height="2" fill="#fff"/><rect x="48.5" y="9.5" width="2" height="4" fill="#fff"/>
<rect x="51.5" y="7" width="2" height="6.5" fill="#fff"/><rect x="54.5" y="5" width="2" height="8.5" fill="#fff"/>
<rect x="57.5" y="3" width="2" height="10.5" fill="#fff"/>
</svg>
<div class="t" style="left:1253.5px;top:743.5px;font-size:11.5px;letter-spacing:1px;color:#fff">ҚАЗ</div>
<div class="t" style="left:1310.5px;top:735px;font-size:12px;letter-spacing:-0.4px;color:#fff">1:58</div>
<div class="t" style="left:1293px;top:752px;font-size:12px;letter-spacing:-0.55px;color:#fff">18.10.2022</div>
<svg style="left:1348px;top:735px" width="9" height="6" viewBox="0 0 9 6"><path d="M0.5 0.5 H8.5 L4.5 5.5 Z" fill="#5a4088"/></svg>
</body></html>
